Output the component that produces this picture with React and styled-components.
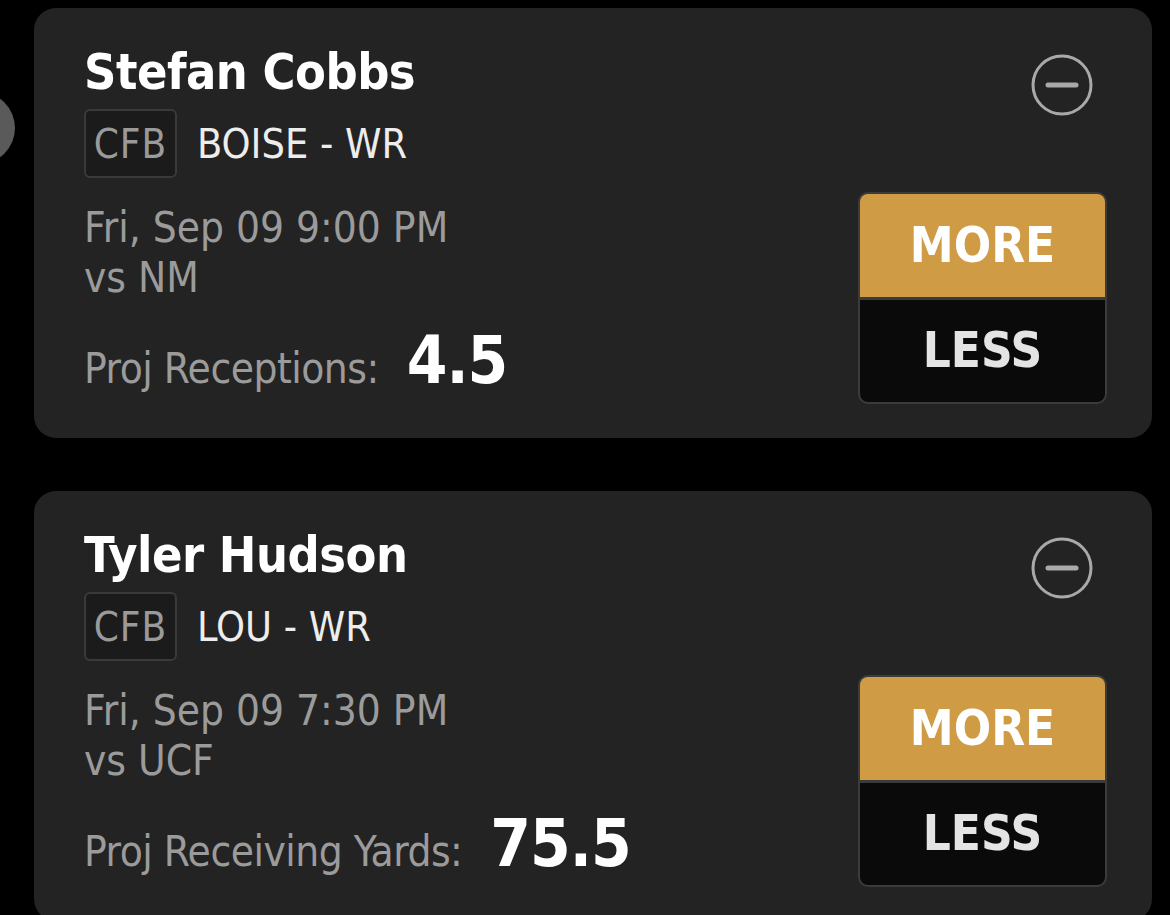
import styled, { createGlobalStyle } from "styled-components";

const GlobalStyle = createGlobalStyle`
  html, body {
    margin: 0;
    padding: 0;
    background: #000;
  }
  body {
    font-family: "DejaVu Sans Condensed", "DejaVu Sans", sans-serif;
    font-stretch: condensed;
  }
`;

const picks = [
  {
    name: "Stefan Cobbs",
    league: "CFB",
    team: "BOISE - WR",
    date: "Fri, Sep 09 9:00 PM",
    opponent: "vs NM",
    stat: "Proj Receptions:",
    line: "4.5",
  },
  {
    name: "Tyler Hudson",
    league: "CFB",
    team: "LOU - WR",
    date: "Fri, Sep 09 7:30 PM",
    opponent: "vs UCF",
    stat: "Proj Receiving Yards:",
    line: "75.5",
  },
];

const MinusIcon = () => (
  <svg width="64" height="64" viewBox="0 0 64 64" fill="none">
    <circle cx="32" cy="32" r="29" stroke="#a9a9a9" strokeWidth="3" />
    <line x1="18" y1="32" x2="46" y2="32" stroke="#a9a9a9" strokeWidth="5" strokeLinecap="round" />
  </svg>
);

const PickCard = ({ pick }) => (
  <Card>
    <Info>
      <Name>{pick.name}</Name>
      <TeamRow>
        <League>{pick.league}</League>
        <Team>{pick.team}</Team>
      </TeamRow>
      <GameInfo>
        <div>{pick.date}</div>
        <div>{pick.opponent}</div>
      </GameInfo>
      <StatRow>
        <StatLabel>{pick.stat}</StatLabel>
        <StatValue>{pick.line}</StatValue>
      </StatRow>
    </Info>
    <Actions>
      <RemoveBtn>
        <MinusIcon />
      </RemoveBtn>
      <Choice>
        <ChoiceBtn variant="more">MORE</ChoiceBtn>
        <ChoiceBtn variant="less">LESS</ChoiceBtn>
      </Choice>
    </Actions>
  </Card>
);

const App = () => {
  return (
    <>
      <GlobalStyle />
      <Page>
        <SideDot />
        {picks.map((p) => (
          <PickCard key={p.name} pick={p} />
        ))}
      </Page>
    </>
  );
};

const Page = styled.div`
  position: relative;
  display: flex;
  flex-direction: column;
  gap: 53px;
  padding: 8px 18px 0 34px;
  height: 907px;
  overflow: hidden;
`;

const SideDot = styled.div`
  position: absolute;
  left: -57px;
  top: 92px;
  width: 72px;
  height: 72px;
  border-radius: 50%;
  background: #5a5a5a;
`;

const Card = styled.div`
  flex-shrink: 0;
  display: flex;
  justify-content: space-between;
  height: 430px;
  box-sizing: border-box;
  padding: 0 45px 34px 50px;
  background: #232323;
  border-radius: 22px;
`;

const Info = styled.div`
  display: flex;
  flex-direction: column;
  padding-top: 34px;
`;

const Name = styled.div`
  font-size: 50px;
  font-weight: bold;
  line-height: 60px;
  color: #fff;
  letter-spacing: -0.5px;
`;

const TeamRow = styled.div`
  display: flex;
  align-items: center;
  gap: 20px;
  margin-top: 7px;
`;

const League = styled.div`
  width: 93px;
  height: 69px;
  box-sizing: border-box;
  display: flex;
  align-items: center;
  justify-content: center;
  border: 2px solid #3a3a3a;
  border-radius: 6px;
  background: #1b1b1b;
  color: #9a9a9a;
  font-size: 40px;
  letter-spacing: 1px;
`;

const Team = styled.div`
  font-size: 41px;
  color: #ededed;
`;

const GameInfo = styled.div`
  margin-top: 25px;
  font-size: 42px;
  line-height: 50px;
  color: #9b9b9b;
`;

const StatRow = styled.div`
  display: flex;
  align-items: baseline;
  gap: 28px;
  margin-top: 20px;
`;

const StatLabel = styled.div`
  font-size: 42px;
  color: #9b9b9b;
  letter-spacing: -0.5px;
`;

const StatValue = styled.div`
  font-size: 65px;
  font-weight: bold;
  color: #fff;
  letter-spacing: -1px;
`;

const Actions = styled.div`
  display: flex;
  flex-direction: column;
  align-items: flex-end;
  justify-content: space-between;
  padding-top: 45px;
`;

const RemoveBtn = styled.div`
  display: flex;
  margin-right: 13px;
`;

const Choice = styled.div`
  width: 249px;
  height: 212px;
  box-sizing: border-box;
  display: flex;
  flex-direction: column;
  gap: 3px;
  border: 2px solid #3b3b3b;
  border-radius: 10px;
  background: #3b3b3b;
  overflow: hidden;
`;

const ChoiceBtn = styled.div`
  flex: 1;
  display: flex;
  align-items: center;
  justify-content: center;
  font-size: 49px;
  font-weight: bold;
  background: ${(props) => (props.variant === "more" ? "#cf9c45" : "#0a0a0a")};
  color: ${(props) => (props.variant === "more" ? "#fff" : "#e4e4e4")};
`;

export default App;
